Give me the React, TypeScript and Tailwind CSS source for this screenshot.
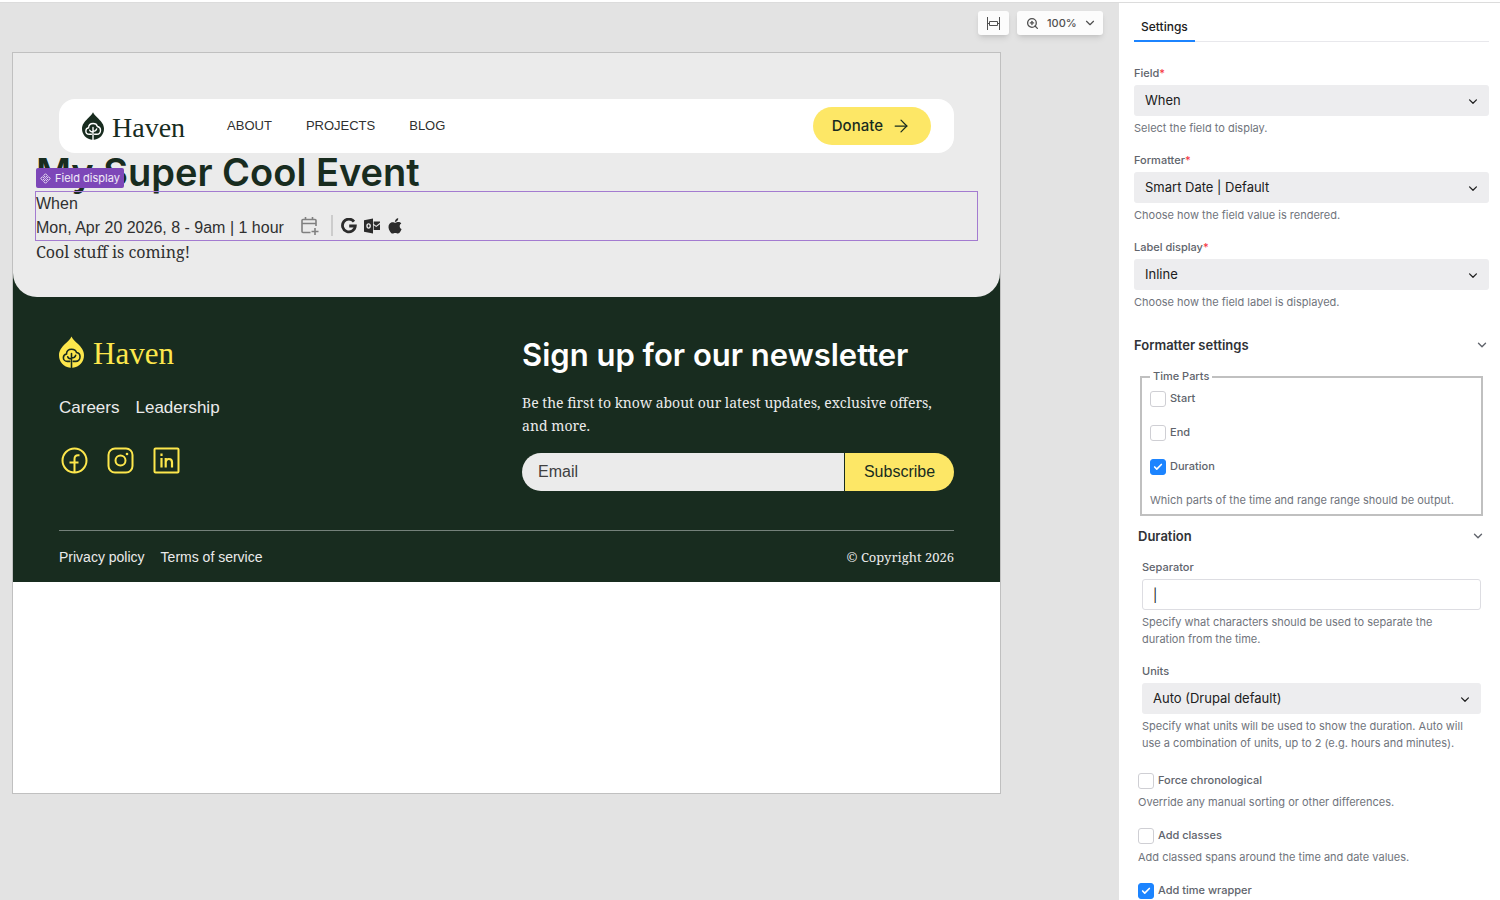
import { ReactNode, useState } from "react";
import { ArrowRight, Check, ChevronDown, ZoomIn } from "lucide-react";

interface ISelectField {
  id: string;
  label: string;
  value: string;
  description: string;
  required?: boolean;
}

interface ICheckField {
  id: string;
  label: string;
  description?: string;
  defaultChecked?: boolean;
}

const navLinks = ["ABOUT", "PROJECTS", "BLOG"];

const mainFields: ISelectField[] = [
  {
    id: "field",
    label: "Field",
    value: "When",
    description: "Select the field to display.",
    required: true,
  },
  {
    id: "formatter",
    label: "Formatter",
    value: "Smart Date | Default",
    description: "Choose how the field value is rendered.",
    required: true,
  },
  {
    id: "label-display",
    label: "Label display",
    value: "Inline",
    description: "Choose how the field label is displayed.",
    required: true,
  },
];

const timeParts: ICheckField[] = [
  { id: "start", label: "Start" },
  { id: "end", label: "End" },
  { id: "duration", label: "Duration", defaultChecked: true },
];

const extraOptions: ICheckField[] = [
  {
    id: "force-chronological",
    label: "Force chronological",
    description: "Override any manual sorting or other differences.",
  },
  {
    id: "add-classes",
    label: "Add classes",
    description: "Add classed spans around the time and date values.",
  },
  { id: "add-time-wrapper", label: "Add time wrapper", defaultChecked: true },
];

const LeafIcon = ({ className }: { className: string }) => (
  <svg viewBox="0 0 24 30" aria-hidden="true" className={className}>
    <path
      className="fill-current"
      d="M12 0C13.2 2.6 15.4 4.4 18 7c3.400 3.400 6 6.400 6 11 0 6.400-4.600 11.200-10.800 12H10.800C4.600 29.200 0 24.400 0 18 0 13.400 2.600 10.400 6 7c2.600-2.600 4.800-4.400 6-7z"
    />
    <g
      fill="none"
      className="stroke-(--leaf-line)"
      strokeWidth="1.5"
      strokeLinecap="round"
    >
      <path d="M12 30V16.500M12 20.800c2.200 0 3.600-1 4-2.600M12 21.500c-2 0-3.200-.6-3.600-2" />
      <path d="M10.300 24H8c-2.200 0-3.800-1.600-3.800-3.600 0-1.900 1.300-3.200 3-3.500.1-2.800 2.200-4.600 4.900-4.600 2.300 0 4.200 1.200 4.700 3.200 2 .3 3.400 1.900 3.400 4.100 0 2.600-1.800 4.400-4.200 4.400h-2.300" />
    </g>
  </svg>
);

const Required = () => <span className="text-[#f5333f]">*</span>;

const SelectBox = ({ id, value }: { id: string; value: string }) => (
  <div className="relative">
    <select
      id={id}
      className="block h-[31px] w-full appearance-none rounded-[3px] bg-[#ededef] px-[11px] text-[13px] text-[#202020]"
    >
      <option>{value}</option>
    </select>
    <ChevronDown
      className="pointer-events-none absolute right-2 top-2 size-4 text-[#202020]"
      viewBox="-2 -3 28 28"
      strokeWidth={2.2}
    />
  </div>
);

const SelectField = ({
  id,
  label,
  value,
  description,
  required,
}: ISelectField) => (
  <div className="flex flex-col">
    <label htmlFor={id} className="mb-[3px] font-medium text-[#60646c]">
      {label}
      {required && <Required />}
    </label>
    <SelectBox id={id} value={value} />
    <p className="mt-1">{description}</p>
  </div>
);

const CheckField = ({ id, label, defaultChecked = false }: ICheckField) => {
  const [checked, setChecked] = useState<boolean>(defaultChecked);

  return (
    <label
      htmlFor={id}
      className="flex items-start gap-1 font-medium text-[#60646c]"
    >
      <span className="relative mt-px block size-4">
        <input
          id={id}
          type="checkbox"
          checked={checked}
          onChange={(e) => setChecked(e.target.checked)}
          className="block size-4 appearance-none rounded-[3px] border border-[#cfcfd4] bg-white checked:border-[#1c84ff] checked:bg-[#1c84ff]"
        />
        {checked && (
          <Check
            className="pointer-events-none absolute left-[3px] top-[3px] size-[10px] text-white"
            strokeWidth={4}
          />
        )}
      </span>
      {label}
    </label>
  );
};

const GroupButton = ({ children }: { children: ReactNode }) => (
  <button
    type="button"
    className="flex w-full items-center justify-between text-[13px] leading-5 font-semibold text-[#303236]"
  >
    {children}
    <ChevronDown className="size-[14px] text-[#60646c]" strokeWidth={2.4} />
  </button>
);

const SettingsPanel = () => {
  const [separator, setSeparator] = useState<string>("|");

  return (
    <aside className="w-[381px] shrink-0 overflow-hidden bg-white pl-[15px] pr-[11px] text-[11px] leading-[17px] text-[#70747c]">
      <div role="tablist" className="flex h-[39px] border-b border-[#e8e8ec]">
        <button
          type="button"
          role="tab"
          aria-selected="true"
          className="-mb-px border-b-2 border-[#1c84ff] px-[7px] pt-[10px] text-xs font-medium text-[#202020]"
        >
          Settings
        </button>
      </div>

      <div className="mt-[23px] flex flex-col gap-[15px]">
        {mainFields.map((item) => (
          <SelectField key={item.id} {...item} />
        ))}
      </div>

      <div className="mt-6">
        <GroupButton>Formatter settings</GroupButton>
      </div>

      <fieldset className="mx-[6px] mt-[13px] border-2 border-[#c0c0c0] px-2 pb-[5px]">
        <legend className="px-[3px] font-medium text-[#60646c]">
          Time Parts
        </legend>
        <div className="flex flex-col gap-[17px] pt-[5px]">
          {timeParts.map((item) => (
            <CheckField key={item.id} {...item} />
          ))}
          <p>Which parts of the time and range range should be output.</p>
        </div>
      </fieldset>

      <div className="mt-[10px] px-1">
        <GroupButton>Duration</GroupButton>
        <div className="mt-[13px] flex flex-col gap-[15px] px-1">
          <div className="flex flex-col">
            <label
              htmlFor="separator"
              className="mb-[3px] font-medium text-[#60646c]"
            >
              Separator
            </label>
            <input
              id="separator"
              type="text"
              value={separator}
              onChange={(e) => setSeparator(e.target.value)}
              className="h-[31px] rounded-[3px] border border-[#dddde2] px-[10px] text-[13px] text-[#202020]"
            />
            <p className="mt-1 pr-6">
              Specify what characters should be used to separate the duration
              from the time.
            </p>
          </div>
          <SelectField
            id="units"
            label="Units"
            value="Auto (Drupal default)"
            description="Specify what units will be used to show the duration. Auto will use a combination of units, up to 2 (e.g. hours and minutes)."
          />
        </div>
        <div className="mt-5 flex flex-col gap-4">
          {extraOptions.map((item) => (
            <div key={item.id}>
              <CheckField {...item} />
              {item.description && (
                <p className="mt-[5px]">{item.description}</p>
              )}
            </div>
          ))}
        </div>
      </div>
    </aside>
  );
};

const Toolbar = () => (
  <div className="flex justify-end gap-2 pr-4 pt-2 text-[#505050]">
    <button
      type="button"
      aria-label="Fit width"
      className="flex h-6 w-[31px] items-center justify-center rounded-[3px] bg-[#fcfcfc] shadow-md"
    >
      <svg
        viewBox="0 0 15 13"
        fill="none"
        stroke="currentColor"
        className="h-[13px] w-[15px]"
      >
        <path d="M1.500 0v13M13.500 0v13M1.500 6.500h2M11.500 6.500h2M3.500 4.500h8v4h-8z" />
      </svg>
    </button>
    <button
      type="button"
      className="flex h-6 w-[86px] items-center rounded-[3px] bg-[#fcfcfc] pl-[9px] pr-[6px] text-[11px] font-medium shadow-md"
    >
      <ZoomIn className="mr-2 size-[13px]" strokeWidth={2.4} />
      100%
      <ChevronDown className="ml-auto size-[14px]" />
    </button>
  </div>
);

const SiteNav = () => (
  <nav className="mx-[46px] flex h-[54px] items-center rounded-2xl bg-white px-[23px]">
    <a
      href="#home"
      className="flex items-center gap-2 text-[#182c1f] [--leaf-line:#ffffff]"
    >
      <LeafIcon className="h-7 w-[22px]" />
      <span className="pt-1 font-['Liberation_Serif',serif] text-[28px] leading-7">
        Haven
      </span>
    </a>
    <div className="ml-[42px] flex gap-[34px] text-[13px]">
      {navLinks.map((item) => (
        <a key={item} href={`#${item.toLowerCase()}`}>
          {item}
        </a>
      ))}
    </div>
    <button
      type="button"
      className="ml-auto flex h-[38px] items-center gap-2 rounded-full bg-[#fde766] pl-[19px] pr-5 font-['Inter',sans-serif] text-[15px] font-medium text-[#182c1f]"
    >
      Donate
      <ArrowRight className="size-5" strokeWidth={1.5} />
    </button>
  </nav>
);

const CalendarLinks = () => (
  <div className="flex items-center pb-1 text-[#2b2b2b]">
    <a href="#ical" aria-label="Add to calendar" className="text-[#808080]">
      <svg
        viewBox="0 0 18 19"
        fill="none"
        stroke="currentColor"
        strokeWidth="1.6"
        className="h-[19px] w-[18px]"
      >
        <path d="M9.500 16.500H2a1 1 0 0 1-1-1V4.500a1 1 0 0 1 1-1h12a1 1 0 0 1 1 1V10M1 7.500h14M4.500 1v3M11.500 1v3M14 12v7M10.500 15.500h7" />
      </svg>
    </a>
    <span className="ml-3 mr-2 h-[21px] w-[2px] bg-[#cccccc]" />
    <a href="#google" aria-label="Google calendar">
      <svg viewBox="0 0 16 16" className="size-4">
        <path
          fill="none"
          stroke="currentColor"
          strokeWidth="2.800"
          d="M13 3.600A6.400 6.400 0 1 0 14.300 8H8.200"
        />
      </svg>
    </a>
    <a href="#outlook" aria-label="Outlook calendar" className="ml-[7px]">
      <svg viewBox="0 0 16 16" className="size-4 fill-current">
        <path
          fillRule="evenodd"
          d="M0 2.200 9 .5v15l-9-1.700zM4.600 5.300C3.200 5.300 2.300 6.400 2.300 8s.9 2.700 2.300 2.700S6.900 9.600 6.900 8 6 5.300 4.600 5.300zm0 1.300c.6 0 .9.600.9 1.400s-.3 1.400-.9 1.400-.9-.6-.9-1.400.3-1.400.9-1.400z"
        />
        <path d="M9.700 3.500H16v1.300l-3.800 2.900-2.500-1.800zM16 6.200V12H9.700V7.300l2.500 1.800z" />
      </svg>
    </a>
    <a href="#apple" aria-label="Apple calendar" className="ml-[7px]">
      <svg viewBox="0 0 16 16" className="size-4 fill-current">
        <path d="M11.200.2c.1 1-.3 1.900-.9 2.600-.6.7-1.500 1.200-2.400 1.100-.1-.9.400-1.900.9-2.500C9.400.7 10.400.2 11.200.2zM14.300 5.500c-1 .6-1.600 1.500-1.600 2.700 0 1.300.8 2.400 1.900 2.900-.3.900-.7 1.700-1.200 2.500-.7 1-1.400 2-2.500 2-1 0-1.400-.6-2.600-.6-1.300 0-1.700.6-2.700.6-1.100 0-1.900-1-2.600-2.100C1.300 11.100 1 7.800 2.400 6c.8-1.200 2-1.800 3.200-1.800 1.200 0 1.900.6 2.900.6.9 0 1.500-.7 2.900-.7 1.100 0 2.200.5 2.900 1.400z" />
      </svg>
    </a>
  </div>
);

const PageBody = () => (
  <div className="px-[23px]">
    <h1 className="font-['Inter',sans-serif] text-[38px] leading-[38px] font-semibold text-[#182c1f]">
      My Super Cool Event
    </h1>
    <section className="relative -mx-px h-[50px] border border-[#a37bd0] text-base">
      <div className="absolute -top-6 left-0 flex h-5 items-center gap-1 rounded-[2px] bg-[#7d47b8] px-1 font-['Inter',sans-serif] text-[11px] text-white/90">
        <svg
          viewBox="0 0 12 12"
          fill="none"
          stroke="currentColor"
          className="size-[11px]"
        >
          <path d="m6 .8 2 2-2 2-2-2zM6 7.200l2 2-2 2-2-2zM2.800 4l2 2-2 2-2-2zM9.200 4l2 2-2 2-2-2z" />
        </svg>
        Field display
      </div>
      <p className="leading-[23px]">When</p>
      <div className="flex items-center gap-[17px] leading-[23px]">
        <time>Mon, Apr 20 2026, 8 - 9am | 1 hour</time>
        <CalendarLinks />
      </div>
    </section>
    <p className="font-['Noto_Serif','Liberation_Serif',serif] text-base leading-[22px]">
      Cool stuff is coming!
    </p>
  </div>
);

const SocialLinks = () => (
  <div className="flex gap-[15px] text-[#fde74c]">
    <a href="#facebook" aria-label="Facebook">
      <svg
        viewBox="0 0 31 31"
        fill="none"
        stroke="currentColor"
        strokeWidth="2"
        className="size-[31px]"
      >
        <circle cx="15.500" cy="15.500" r="12" />
        <path d="M15.500 27.500V14c0-2.500 1.200-3.700 3.500-3.700h1.500M10.500 17.500h9" />
      </svg>
    </a>
    <a href="#instagram" aria-label="Instagram">
      <svg
        viewBox="0 0 31 31"
        fill="none"
        stroke="currentColor"
        strokeWidth="2"
        className="size-[31px]"
      >
        <rect x="3.500" y="3.500" width="24" height="24" rx="6.500" />
        <circle cx="15.500" cy="15.500" r="5" />
        <circle cx="22" cy="9" r="1.300" fill="currentColor" stroke="none" />
      </svg>
    </a>
    <a href="#linkedin" aria-label="LinkedIn">
      <svg
        viewBox="0 0 31 31"
        fill="none"
        stroke="currentColor"
        strokeWidth="2"
        className="size-[31px]"
      >
        <rect x="3.500" y="3.500" width="24" height="24" rx="1" />
        <path
          strokeWidth="2.200"
          d="M10.500 13v9.500M10.500 8.500v2.400M14.700 13v9.500M14.700 22v-4.700c0-2 1.300-3.300 3.100-3.300s3.200 1.300 3.200 3.300v5.200"
        />
      </svg>
    </a>
  </div>
);

const SiteFooter = () => (
  <footer className="px-[46px] pt-[38px] text-[#ebebeb]">
    <div className="grid grid-cols-2 gap-[31px]">
      <div>
        <a
          href="#home"
          className="flex h-[33px] items-center gap-[9px] text-[#fde74c] [--leaf-line:#182c1f]"
        >
          <LeafIcon className="h-8 w-[25px]" />
          <span className="pt-1 font-['Liberation_Serif',serif] text-[31px] leading-8">
            Haven
          </span>
        </a>
        <div className="mt-7 mb-[25px] flex gap-4 text-[17px] leading-6">
          <a href="#careers">Careers</a>
          <a href="#leadership">Leadership</a>
        </div>
        <SocialLinks />
      </div>
      <div>
        <h2 className="font-['Inter',sans-serif] text-[31px] leading-10 font-semibold text-white">
          Sign up for our newsletter
        </h2>
        <p className="mt-4 mb-4 font-['Noto_Serif','Liberation_Serif',serif] text-sm leading-[23px]">
          Be the first to know about our latest updates, exclusive offers, and
          more.
        </p>
        <form
          className="flex h-[38px] gap-px"
          onSubmit={(e) => e.preventDefault()}
        >
          <input
            type="email"
            aria-label="Email"
            placeholder="Email"
            className="min-w-0 flex-1 rounded-l-full bg-[#ebebeb] px-4 text-base text-[#303030] placeholder:text-[#404040]"
          />
          <button
            type="submit"
            className="w-[109px] rounded-r-full bg-[#fde766] text-base text-[#182c1f]"
          >
            Subscribe
          </button>
        </form>
      </div>
    </div>
    <div className="mt-[39px] flex items-center justify-between border-t border-[#74817a] pt-4 pb-[15px] text-sm leading-5">
      <div className="flex gap-4">
        <a href="#privacy">Privacy policy</a>
        <a href="#terms">Terms of service</a>
      </div>
      <p className="font-['Noto_Serif','Liberation_Serif',serif] text-[13px]">
        © Copyright 2026
      </p>
    </div>
  </footer>
);

const App = () => {
  return (
    <div className="flex h-screen flex-col overflow-hidden bg-white font-['Inter','Liberation_Sans',sans-serif]">
      <div className="h-[3px] shrink-0 border-b border-[#dcdcdc]" />
      <div className="flex min-h-0 flex-1">
        <main className="flex min-w-0 flex-1 flex-col bg-[#e3e3e3]">
          <Toolbar />
          <div className="mt-[17px] mr-[118px] mb-[106px] ml-3 flex-1 border border-[#c0c0c0] bg-white font-['Liberation_Sans',sans-serif] text-[#303030]">
            <div className="bg-[#182c1f]">
              <div className="rounded-b-3xl bg-[#ebebeb] pt-[46px] pb-[34px]">
                <SiteNav />
                <PageBody />
              </div>
              <SiteFooter />
            </div>
          </div>
        </main>
        <SettingsPanel />
      </div>
    </div>
  );
};

export default App;
